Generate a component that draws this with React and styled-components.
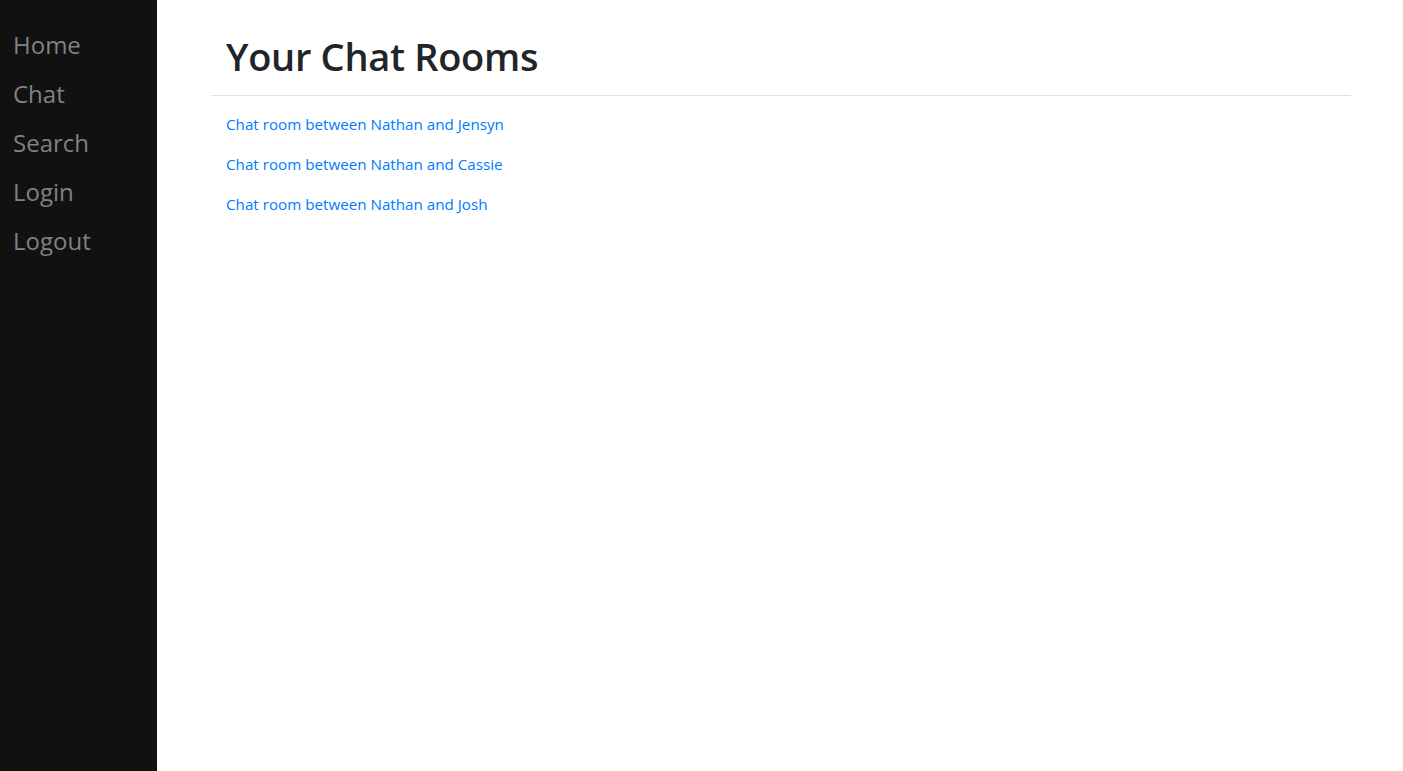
import React from "react";
import styled, { createGlobalStyle } from "styled-components";

const Global = createGlobalStyle`
  * { box-sizing: border-box; }
  html, body { margin: 0; padding: 0; }
  body {
    font-family: "Open Sans", "Noto Sans", "Liberation Sans", sans-serif;
    font-size: 16px;
    line-height: 1.5;
    color: #212529;
    background: #fff;
  }
`;

const Layout = styled.div`
  display: flex;
  min-height: 100vh;
`;

const Sidebar = styled.nav`
  width: 157px;
  flex-shrink: 0;
  background: #111;
  padding-top: 20px;
  display: flex;
  flex-direction: column;
  align-items: flex-start;
`;

const NavLink = styled.a`
  display: block;
  padding: 6px 8px 6px 13px;
  font-size: 24px;
  line-height: 37px;
  color: #818181;
  text-decoration: none;
`;

const Main = styled.main`
  flex: 1;
  display: flex;
  justify-content: center;
  padding-left: 2px;
`;

const Container = styled.div`
  width: 1140px;
  padding-top: 32px;
`;

const Heading = styled.h1`
  margin: 0 0 15px;
  padding: 0 15px;
  font-size: 38px;
  font-weight: 600;
  line-height: 48px;
  color: #212529;
  letter-spacing: -0.3px;
`;

const Rule = styled.hr`
  margin: 0 0 16px;
  border: 0;
  border-top: 1px solid rgba(0, 0, 0, 0.12);
`;

const List = styled.div`
  padding: 0 15px;
`;

const RoomLink = styled.a`
  display: block;
  margin: 0 0 16px;
  font-size: 15.2px;
  line-height: 24px;
  color: #007bff;
  text-decoration: none;
`;

const navItems = ["Home", "Chat", "Search", "Login", "Logout"];
const rooms = ["Jensyn", "Cassie", "Josh"];

export default function App() {
  return (
    <>
      <Global />
      <Layout>
        <Sidebar>
          {navItems.map((n) => (
            <NavLink key={n} href="#">{n}</NavLink>
          ))}
        </Sidebar>
        <Main>
          <Container>
            <Heading>Your Chat Rooms</Heading>
            <Rule />
            <List>
              {rooms.map((r) => (
                <RoomLink key={r} href="#">Chat room between Nathan and {r}</RoomLink>
              ))}
            </List>
          </Container>
        </Main>
      </Layout>
    </>
  );
}
